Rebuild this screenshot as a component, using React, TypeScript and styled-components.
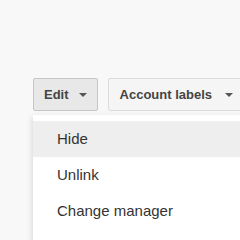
import React from 'react';
import styled, { createGlobalStyle } from 'styled-components';

const GlobalStyle = createGlobalStyle`
  html, body {
    margin: 0;
    padding: 0;
    background: #f8f8f8;
    font-family: "Liberation Sans", Arial, sans-serif;
    overflow: hidden;
  }
`;

const Page = styled.div`
  width: 240px;
  height: 240px;
  padding: 78px 0 0 33px;
  box-sizing: border-box;
  overflow: hidden;
`;

const Toolbar = styled.div`
  display: flex;
  gap: 10px;
  white-space: nowrap;
`;

const Anchor = styled.div`
  position: relative;
`;

const Button = styled.div<{ $active?: boolean }>`
  display: flex;
  align-items: center;
  height: 33px;
  box-sizing: border-box;
  padding: 0 10px 0 ${p => (p.$active ? 10 : 11)}px;
  gap: ${p => (p.$active ? 10 : 13)}px;
  border: 1px solid ${p => (p.$active ? '#c6c6c6' : '#dcdcdc')};
  border-radius: 2px;
  background: ${p => (p.$active ? '#e8e8e8' : '#f5f5f5')};
  color: #444;
  font-size: 13px;
  font-weight: bold;
`;

const Arrow = styled.span`
  width: 0;
  height: 0;
  border-left: 4px solid transparent;
  border-right: 4px solid transparent;
  border-top: 4px solid #555;
  margin-top: 1px;
`;

const Menu = styled.div`
  position: absolute;
  top: calc(100% + 4px);
  left: 0;
  width: 230px;
  padding: 6px 0 24px;
  background: #fff;
  box-shadow: -1px 2px 6px rgba(0, 0, 0, 0.13);
`;

const Item = styled.div<{ $hover?: boolean }>`
  height: 36px;
  line-height: 36px;
  padding-left: 24px;
  font-size: 15px;
  color: #333;
  background: ${p => (p.$hover ? '#eeeeee' : 'transparent')};
`;

export default function App() {
  return (
    <Page>
      <GlobalStyle />
      <Toolbar>
        <Anchor>
          <Button $active>
            Edit
            <Arrow />
          </Button>
          <Menu>
            <Item $hover>Hide</Item>
            <Item>Unlink</Item>
            <Item>Change manager</Item>
          </Menu>
        </Anchor>
        <Button>
          Account labels
          <Arrow />
        </Button>
      </Toolbar>
    </Page>
  );
}
